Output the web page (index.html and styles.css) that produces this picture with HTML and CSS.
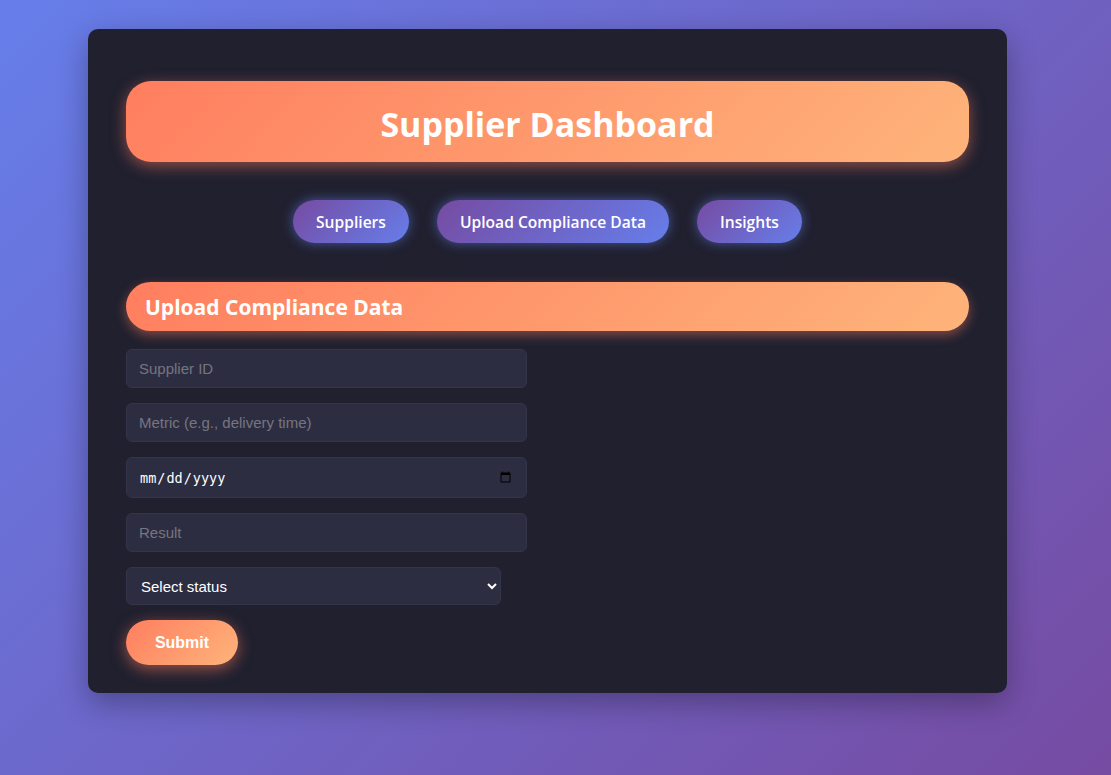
FILE: index.html
```html
<!DOCTYPE html>
<html lang="en">
<head>
<meta charset="utf-8">
<title>Supplier Dashboard</title>
<link rel="stylesheet" href="styles.css">
</head>
<body>
<div class="container">
  <header class="hero"><h1>Supplier Dashboard</h1></header>
  <nav class="nav">
    <button class="nav-btn">Suppliers</button>
    <button class="nav-btn">Upload Compliance Data</button>
    <button class="nav-btn">Insights</button>
  </nav>
  <section class="section">
    <h2 class="section-title">Upload Compliance Data</h2>
    <form class="form">
      <input class="field" type="text" placeholder="Supplier ID">
      <input class="field" type="text" placeholder="Metric (e.g., delivery time)">
      <input class="field date" type="date">
      <input class="field" type="text" placeholder="Result">
      <select class="field select">
        <option>Select status</option>
        <option>Compliant</option>
        <option>Non-compliant</option>
      </select>
      <button type="button" class="submit">Submit</button>
    </form>
  </section>
</div>
</body>
</html>
```
FILE: styles.css
```css
html, body {
  height: 100%;
}
body {
  margin: 0;
  padding: 29px 0 0 88px;
  box-sizing: border-box;
  background: linear-gradient(135deg, #667eea 0%, #764ba2 100%);
  font-family: "Open Sans", "Noto Sans", sans-serif;
  color: #fff;
  overflow: hidden;
}
.container {
  width: 919px;
  box-sizing: border-box;
  background: #20202f;
  border-radius: 10px;
  padding: 52px 38px 28px;
  box-shadow: 0 10px 30px rgba(0, 0, 0, 0.3);
}
.hero {
  height: 81px;
  box-sizing: border-box;
  padding-top: 4px;
  border-radius: 25px;
  background: linear-gradient(135deg, #ff7e5f 0%, #feb47b 100%);
  box-shadow: 0 4px 15px rgba(255, 126, 95, 0.5);
  display: flex;
  align-items: center;
  justify-content: center;
}
.hero h1 {
  margin: 0;
  font-size: 34px;
  font-weight: 700;
  color: #fff;
}
.nav {
  display: flex;
  justify-content: center;
  gap: 28px;
  margin-top: 38px;
}
.nav-btn {
  height: 43px;
  padding: 0 23px;
  border: none;
  border-radius: 22px;
  background: linear-gradient(135deg, #764ba2 0%, #667eea 100%);
  box-shadow: 0 0 12px rgba(102, 126, 234, 0.6);
  color: #fff;
  font-family: "Open Sans", "Noto Sans", sans-serif;
  font-size: 15.6px;
  font-weight: 600;
}
.section {
  margin-top: 39px;
}
.section-title {
  margin: 0;
  height: 49px;
  display: flex;
  align-items: center;
  padding: 0 19px;
  border-radius: 25px;
  background: linear-gradient(135deg, #ff7e5f 0%, #feb47b 100%);
  box-shadow: 0 4px 12px rgba(255, 126, 95, 0.45);
  font-size: 21px;
  font-weight: 700;
  color: #fff;
}
.form {
  margin-top: 18px;
  display: flex;
  flex-direction: column;
  align-items: flex-start;
  gap: 15px;
}
.field {
  width: 401px;
  height: 39px;
  box-sizing: border-box;
  padding: 0 12px;
  background: #2d2d42;
  border: 1px solid #353549;
  border-radius: 6px;
  color: #fff;
  font-family: "Liberation Sans", Arial, sans-serif;
  font-size: 15px;
  outline: none;
}
.field::placeholder {
  color: #757580;
}
.date {
  height: 41px;
  color-scheme: light;
  color: #fff;
  font-family: "DejaVu Sans Mono", monospace;
  font-size: 13.5px;
}
.select {
  width: 375px;
  height: 38px;
  padding: 0 10px;
  color-scheme: dark;
}
.submit {
  height: 45px;
  width: 112px;
  border: none;
  border-radius: 23px;
  background: linear-gradient(135deg, #ff7e5f 0%, #feb47b 100%);
  box-shadow: 0 4px 15px rgba(255, 126, 95, 0.55);
  color: #fff;
  font-family: "Liberation Sans", Arial, sans-serif;
  font-size: 16px;
  font-weight: 700;
}
```
